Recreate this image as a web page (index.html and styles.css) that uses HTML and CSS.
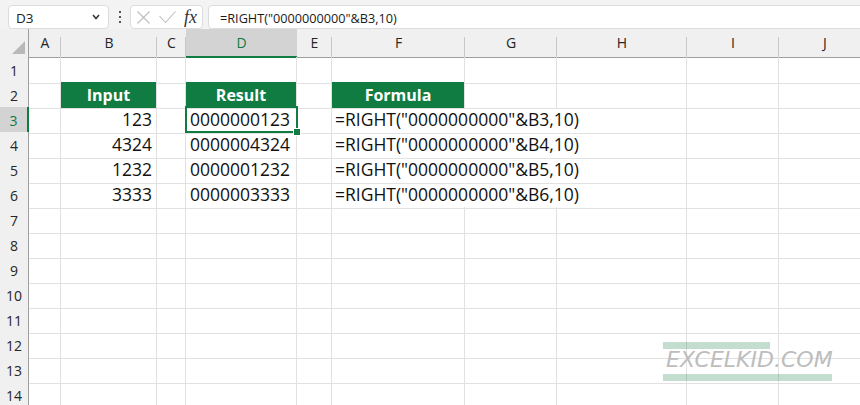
FILE: index.html
```html
<!DOCTYPE html>
<html>
<head>
<meta charset="utf-8">
<link rel="stylesheet" href="styles.css">
</head>
<body>
<div class="app">
  <div class="toolbar">
    <div class="namebox">
      <span class="ref">D3</span>
      <svg class="chev" width="8" height="6" viewBox="0 0 8 6"><polyline points="1,1 4,4.5 7,1" fill="none" stroke="#333" stroke-width="1.5"/></svg>
    </div>
    <div class="dots"><i></i><i></i><i></i></div>
    <div class="fxbox">
      <svg class="ico-x" width="13" height="13" viewBox="0 0 13 13"><path d="M0.5 0.5 L12.5 12.5 M12.5 0.5 L0.5 12.5" stroke="#bdbdbd" stroke-width="1.1" fill="none"/></svg>
      <svg class="ico-ok" width="17" height="13" viewBox="0 0 17 13"><polyline points="0.5,5 6.5,11.5 16.5,0.5" stroke="#bdbdbd" stroke-width="1.1" fill="none"/></svg>
      <span class="fx">fx</span>
    </div>
    <div class="formula">=RIGHT("0000000000"&amp;B3,10)</div>
  </div>

  <div class="sheet">
    <div class="row colhead">
      <div class="corner"><svg width="29" height="28" viewBox="0 0 29 28"><polygon points="12,25 25,25 25,12" fill="#b9b9b9"/></svg></div>
      <div class="ch">A</div><div class="ch">B</div><div class="ch">C</div><div class="ch active">D</div><div class="ch">E</div><div class="ch">F</div><div class="ch">G</div><div class="ch">H</div><div class="ch">I</div><div class="ch">J</div>
    </div>

    <div class="row"><div class="rh">1</div><div class="c"></div><div class="c"></div><div class="c"></div><div class="c"></div><div class="c"></div><div class="c"></div><div class="c"></div><div class="c"></div><div class="c"></div><div class="c"></div></div>

    <div class="row"><div class="rh">2</div><div class="c"></div><div class="c hdr">Input</div><div class="c"></div><div class="c hdr">Result</div><div class="c"></div><div class="c hdr">Formula</div><div class="c"></div><div class="c"></div><div class="c"></div><div class="c"></div></div>

    <div class="row"><div class="rh active">3</div><div class="c"></div><div class="c num">123</div><div class="c"></div><div class="c txt">0000000123</div><div class="c"></div><div class="c spill">=RIGHT("0000000000"&amp;B3,10)</div><div class="c nb"></div><div class="c"></div><div class="c"></div><div class="c"></div></div>

    <div class="row"><div class="rh">4</div><div class="c"></div><div class="c num">4324</div><div class="c"></div><div class="c txt">0000004324</div><div class="c"></div><div class="c spill">=RIGHT("0000000000"&amp;B4,10)</div><div class="c nb"></div><div class="c"></div><div class="c"></div><div class="c"></div></div>

    <div class="row"><div class="rh">5</div><div class="c"></div><div class="c num">1232</div><div class="c"></div><div class="c txt">0000001232</div><div class="c"></div><div class="c spill">=RIGHT("0000000000"&amp;B5,10)</div><div class="c nb"></div><div class="c"></div><div class="c"></div><div class="c"></div></div>

    <div class="row"><div class="rh">6</div><div class="c"></div><div class="c num">3333</div><div class="c"></div><div class="c txt">0000003333</div><div class="c"></div><div class="c spill">=RIGHT("0000000000"&amp;B6,10)</div><div class="c nb"></div><div class="c"></div><div class="c"></div><div class="c"></div></div>

    <div class="row"><div class="rh">7</div><div class="c"></div><div class="c"></div><div class="c"></div><div class="c"></div><div class="c"></div><div class="c"></div><div class="c"></div><div class="c"></div><div class="c"></div><div class="c"></div></div>
    <div class="row"><div class="rh">8</div><div class="c"></div><div class="c"></div><div class="c"></div><div class="c"></div><div class="c"></div><div class="c"></div><div class="c"></div><div class="c"></div><div class="c"></div><div class="c"></div></div>
    <div class="row"><div class="rh">9</div><div class="c"></div><div class="c"></div><div class="c"></div><div class="c"></div><div class="c"></div><div class="c"></div><div class="c"></div><div class="c"></div><div class="c"></div><div class="c"></div></div>
    <div class="row"><div class="rh">10</div><div class="c"></div><div class="c"></div><div class="c"></div><div class="c"></div><div class="c"></div><div class="c"></div><div class="c"></div><div class="c"></div><div class="c"></div><div class="c"></div></div>
    <div class="row"><div class="rh">11</div><div class="c"></div><div class="c"></div><div class="c"></div><div class="c"></div><div class="c"></div><div class="c"></div><div class="c"></div><div class="c"></div><div class="c"></div><div class="c"></div></div>
    <div class="row"><div class="rh">12</div><div class="c"></div><div class="c"></div><div class="c"></div><div class="c"></div><div class="c"></div><div class="c"></div><div class="c"></div><div class="c"></div><div class="c"></div><div class="c"></div></div>
    <div class="row"><div class="rh">13</div><div class="c"></div><div class="c"></div><div class="c"></div><div class="c"></div><div class="c"></div><div class="c"></div><div class="c"></div><div class="c"></div><div class="c"></div><div class="c"></div></div>
    <div class="row"><div class="rh">14</div><div class="c"></div><div class="c"></div><div class="c"></div><div class="c"></div><div class="c"></div><div class="c"></div><div class="c"></div><div class="c"></div><div class="c"></div><div class="c"></div></div>
  </div>

  <div class="selection"><span class="handle"></span></div>

  <div class="watermark">
    <div class="bar bar-top"></div>
    <div class="wm-text">EXCELKID.COM</div>
    <div class="bar bar-bottom"></div>
  </div>
</div>
</body>
</html>
```

FILE: styles.css
```css
html, body {
  margin: 0;
  padding: 0;
  background: #ffffff;
}

.app {
  position: relative;
  width: 860px;
  height: 405px;
  overflow: hidden;
  font-family: "Open Sans", "Noto Sans", sans-serif;
  color: #1f1f1f;
}

/* ---------- toolbar / formula bar ---------- */
.toolbar {
  display: flex;
  align-items: flex-start;
  height: 29px;
  padding-top: 5px;
  box-sizing: border-box;
  background: #f3f3f3;
}

.namebox {
  display: flex;
  align-items: center;
  justify-content: space-between;
  margin-left: 8px;
  width: 101px;
  height: 24px;
  box-sizing: border-box;
  padding: 0 8px 0 7px;
  background: #ffffff;
  border: 1px solid #dcdcdc;
  border-radius: 4px;
}

.ref {
  font-size: 13.5px;
  line-height: 22px;
  padding-top: 1px;
  color: #222;
}

.chev {
  display: block;
}

.dots {
  display: flex;
  flex-direction: column;
  justify-content: center;
  gap: 3px;
  width: 2px;
  height: 24px;
  margin: 0 9px 0 10px;
}

.dots i {
  display: block;
  width: 2px;
  height: 2px;
  background: #555;
}

.fxbox {
  display: flex;
  align-items: center;
  width: 73px;
  height: 24px;
  box-sizing: border-box;
  padding-left: 6px;
  background: #ffffff;
  border: 1px solid #dcdcdc;
  border-radius: 4px;
}

.ico-x { display: block; }
.ico-ok { display: block; margin-left: 9px; margin-top: 1px; }

.fx {
  margin-left: 8px;
  font-family: "Liberation Serif", "DejaVu Serif", serif;
  font-style: italic;
  font-size: 18px;
  line-height: 20px;
  color: #333;
}

.formula {
  flex: 1;
  margin-left: 5px;
  margin-right: -8px;
  height: 24px;
  box-sizing: border-box;
  padding: 1px 0 0 11px;
  background: #ffffff;
  border: 1px solid #dcdcdc;
  border-radius: 4px;
  font-size: 12.7px;
  line-height: 22px;
  color: #1a1a1a;
  white-space: nowrap;
}

/* ---------- sheet grid ---------- */
.sheet {
  display: flex;
  flex-direction: column;
}

.row {
  display: grid;
  grid-template-columns: 29px 32px 96px 29px 111px 35px 133px 92px 130px 92px 92px;
  height: 25px;
}

.colhead {
  height: 28px;
}

.corner {
  background: #f0f0f0;
  border-right: 1px solid #9e9e9e;
  border-bottom: 1px solid #9e9e9e;
  box-sizing: border-box;
}

.corner svg { display: block; }

.ch {
  box-sizing: border-box;
  border-bottom: 1px solid #9e9e9e;
  background: linear-gradient(#c8c8c8, #c8c8c8) right bottom / 1px 20px no-repeat, #f0f0f0;
  text-align: center;
  font-size: 14px;
  line-height: 24px;
  padding-top: 2px;
  color: #262626;
}

.ch.active {
  background: #d3d3d3;
  border-bottom: 2px solid #107c41;
  color: #107c41;
}

.rh {
  box-sizing: border-box;
  background: #f0f0f0;
  border-right: 1px solid #9e9e9e;
  border-bottom: 1px solid #dadada;
  text-align: center;
  font-size: 14px;
  line-height: 24px;
  padding-top: 2px;
  color: #262626;
}

.rh.active {
  background: #d3d3d3;
  border-right: 2px solid #107c41;
  color: #107c41;
}

.c {
  box-sizing: border-box;
  border-right: 1px solid #e1e1e1;
  border-bottom: 1px solid #e1e1e1;
  font-size: 17.5px;
  line-height: 24px;
  white-space: nowrap;
  color: #111;
}

.hdr {
  background: #107c41;
  color: #ffffff;
  font-weight: 700;
  font-size: 16px;
  text-align: center;
  line-height: 24px;
  padding-top: 1px;
}

.num {
  text-align: right;
  padding-right: 4px;
}

.txt {
  padding-left: 4px;
}

.spill {
  padding-left: 3px;
  border-right-color: transparent;
  overflow: visible;
}

.nb {
  border-right-color: transparent;
}

/* ---------- active cell overlay ---------- */
.selection {
  position: absolute;
  left: 185px;
  top: 106px;
  width: 113px;
  height: 27px;
  box-sizing: border-box;
  border: 2px solid #107c41;
}

.handle {
  position: absolute;
  right: -5px;
  bottom: -5px;
  width: 6px;
  height: 6px;
  background: #107c41;
  border: 1px solid #ffffff;
}

/* ---------- watermark ---------- */
.watermark {
  position: absolute;
  left: 663px;
  top: 342px;
  display: flex;
  flex-direction: column;
  align-items: flex-start;
}

.bar {
  height: 7px;
  background: rgba(16, 124, 65, 0.25);
}

.bar-top { width: 107px; }
.bar-bottom { width: 169px; margin-top: 3px; }

.wm-text {
  margin-left: 3px;
  font-family: "DejaVu Sans", sans-serif;
  font-style: italic;
  font-size: 22px;
  line-height: 22px;
  color: #bdbdbd;
  white-space: nowrap;
}
```
